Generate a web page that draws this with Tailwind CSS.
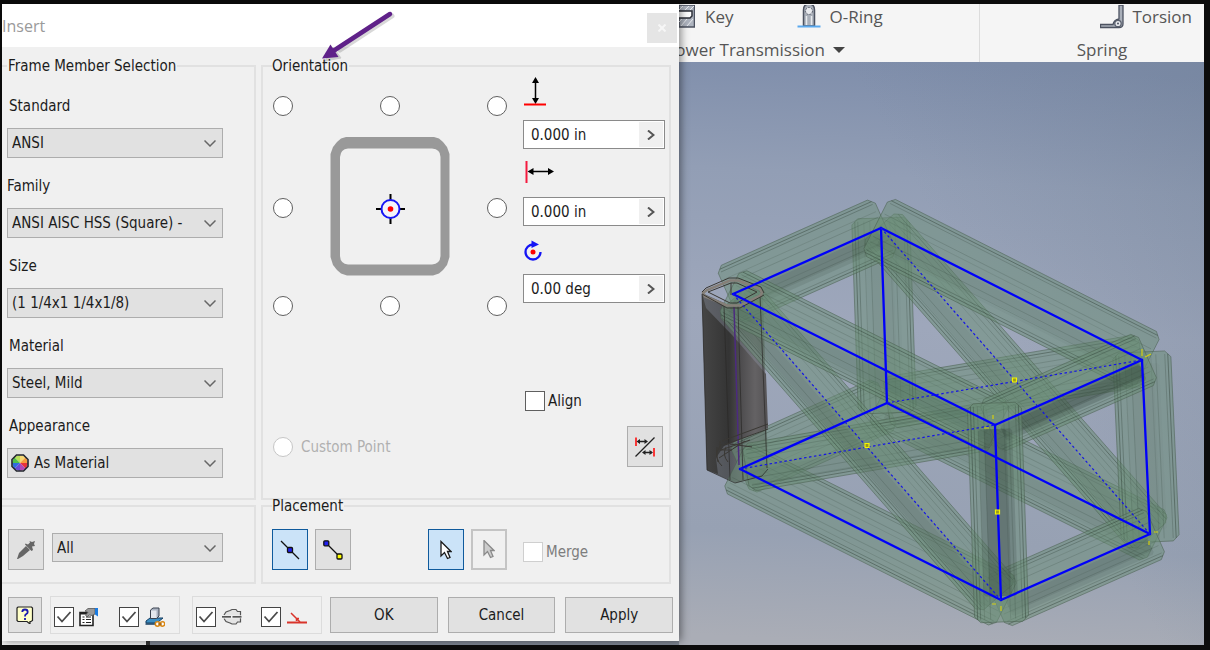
<!DOCTYPE html>
<html lang="en">
<head>
    <meta charset="UTF-8">
    <meta name="viewport" content="width=device-width, initial-scale=1.0">
    <title>Insert</title>
    <script src="https://cdn.jsdelivr.net/npm/@tailwindcss/browser@4"></script>
</head>
<body class="bg-[#0c0c0c] font-['DejaVu_Sans_Condensed','Noto_Sans',sans-serif] text-[15px] leading-5 text-[#1c1c1c]">

    <div class="grid min-h-screen grid-cols-[677fr_525fr] pt-1 pr-1.5 pb-[5px] pl-0.5">

        <!-- Insert dialog -->
        <div class="flex min-w-0 flex-col">
            <div class="relative z-10 flex flex-1 flex-col bg-[#f0f0f0] shadow-[2px_0_8px_rgba(0,0,0,0.45)]">
                <div class="flex h-[43px] items-center justify-between bg-white pr-0.5">
                    <h1 class="font-['Open_Sans','Noto_Sans',sans-serif] text-[16px] text-[#9a9a9a]">Insert</h1>
                    <button type="button" aria-label="Close" class="mt-1 flex h-[30px] w-[30px] items-center justify-center bg-[#e5e5e5]">
                        <svg class="h-2 w-2" viewBox="0 0 8 8" stroke="#f6f6f6" stroke-width="2"><path d="M0.5 0.5L7.5 7.5M7.5 0.5L0.5 7.5"/></svg>
                    </button>
                </div>

                <svg class="pointer-events-none absolute top-1 left-[312px] h-14 w-22" viewBox="314 8 88 56">
                    <g fill="#000" stroke="#000" opacity="0.15"><path d="M392 16L340 50" stroke-width="5" stroke-linecap="round"/><path d="M325 61L333 47L341 58Z"/></g>
                    <path d="M390 14L334 50.500" stroke="#5f2189" stroke-width="4.500" stroke-linecap="round"/>
                    <path d="M322 58.500L330.500 44.500L338.500 57Z" fill="#5f2189"/>
                </svg>

                <div class="grid flex-1 grid-cols-[254px_1fr] grid-rows-[1fr_79px] gap-x-[5px] gap-y-[5px] pt-[18px] pr-2">

                    <fieldset class="border-2 border-l-0 border-[#e1e1e1] pl-[5px]">
                        <legend class="h-0.5 px-px leading-[2px]">Frame Member Selection</legend>
                        <div class="flex w-[216px] flex-col gap-[18px] pt-[29px]">
                            <div class="flex flex-col gap-3">
                                <label for="standard" class="pl-0.5">Standard</label>
                                <div class="grid items-center">
                                    <select id="standard" class="col-start-1 row-start-1 h-[30px] appearance-none border border-[#adadad] bg-[#e1e1e1] px-1"><option>ANSI</option></select>
                                    <svg class="pointer-events-none col-start-1 row-start-1 mr-[7px] h-3 w-3 justify-self-end" viewBox="0 0 12 12" fill="none" stroke="#666" stroke-width="1.500"><path d="M0.500 3.500L6 9L11.500 3.500"/></svg>
                                </div>
                            </div>
                            <div class="flex flex-col gap-3">
                                <label for="family">Family</label>
                                <div class="grid items-center">
                                    <select id="family" class="col-start-1 row-start-1 h-[30px] appearance-none border border-[#adadad] bg-[#e1e1e1] px-1"><option>ANSI AISC HSS (Square) -</option></select>
                                    <svg class="pointer-events-none col-start-1 row-start-1 mr-[7px] h-3 w-3 justify-self-end" viewBox="0 0 12 12" fill="none" stroke="#666" stroke-width="1.500"><path d="M0.500 3.500L6 9L11.500 3.500"/></svg>
                                </div>
                            </div>
                            <div class="flex flex-col gap-3">
                                <label for="size" class="pl-0.5">Size</label>
                                <div class="grid items-center">
                                    <select id="size" class="col-start-1 row-start-1 h-[30px] appearance-none border border-[#adadad] bg-[#e1e1e1] px-1"><option>(1 1/4x1 1/4x1/8)</option></select>
                                    <svg class="pointer-events-none col-start-1 row-start-1 mr-[7px] h-3 w-3 justify-self-end" viewBox="0 0 12 12" fill="none" stroke="#666" stroke-width="1.500"><path d="M0.500 3.500L6 9L11.500 3.500"/></svg>
                                </div>
                            </div>
                            <div class="flex flex-col gap-3">
                                <label for="material" class="pl-0.5">Material</label>
                                <div class="grid items-center">
                                    <select id="material" class="col-start-1 row-start-1 h-[30px] appearance-none border border-[#adadad] bg-[#e1e1e1] px-1"><option>Steel, Mild</option></select>
                                    <svg class="pointer-events-none col-start-1 row-start-1 mr-[7px] h-3 w-3 justify-self-end" viewBox="0 0 12 12" fill="none" stroke="#666" stroke-width="1.500"><path d="M0.500 3.500L6 9L11.500 3.500"/></svg>
                                </div>
                            </div>
                            <div class="flex flex-col gap-3">
                                <label for="appearance" class="pl-0.5">Appearance</label>
                                <div class="grid items-center">
                                    <select id="appearance" class="col-start-1 row-start-1 h-[30px] appearance-none border border-[#adadad] bg-[#e1e1e1] pr-1 pl-[26px]"><option>As Material</option></select>
                                    <svg class="pointer-events-none col-start-1 row-start-1 ml-1 h-[18px] w-[18px]" viewBox="0 0 18 18">
                                        <path d="M9 9L3 3L9 1Z" fill="#b8e05a"/><path d="M9 9L9 1L15 3Z" fill="#f6d873"/>
                                        <path d="M9 9L15 3L17 9Z" fill="#f79a3c"/><path d="M9 9L17 9L15 15Z" fill="#e8323c"/>
                                        <path d="M9 9L15 15L9 17Z" fill="#b247b5"/><path d="M9 9L9 17L3 15Z" fill="#6a49d8"/>
                                        <path d="M9 9L3 15L1 9Z" fill="#2f6be0"/><path d="M9 9L1 9L3 3Z" fill="#4fc04a"/>
                                        <path d="M5.500 1H12.500L17 5.500V12.500L12.500 17H5.500L1 12.500V5.500Z" fill="none" stroke="#23262e" stroke-width="1.600"/>
                                    </svg>
                                    <svg class="pointer-events-none col-start-1 row-start-1 mr-[7px] h-3 w-3 justify-self-end" viewBox="0 0 12 12" fill="none" stroke="#666" stroke-width="1.500"><path d="M0.500 3.500L6 9L11.500 3.500"/></svg>
                                </div>
                            </div>
                        </div>
                    </fieldset>

                    <fieldset class="border-2 border-[#e1e1e1] pr-1 pl-[9px]">
                        <legend class="h-0.5 pr-px leading-[2px]">Orientation</legend>
                        <div class="flex h-full flex-col">
                            <div class="flex gap-4">
                                <div class="grid flex-1 grid-cols-[20px_1fr_20px] items-center justify-items-center gap-y-5 self-start pt-[29px] pl-px">
                                    <input type="radio" name="anchor" aria-label="Top left" class="h-5 w-5 appearance-none rounded-full border border-[#5f5f5f] bg-white">
                                    <input type="radio" name="anchor" aria-label="Top center" class="h-5 w-5 appearance-none rounded-full border border-[#5f5f5f] bg-white">
                                    <input type="radio" name="anchor" aria-label="Top right" class="h-5 w-5 appearance-none rounded-full border border-[#5f5f5f] bg-white">
                                    <input type="radio" name="anchor" aria-label="Middle left" class="mt-1 h-5 w-5 appearance-none rounded-full border border-[#5f5f5f] bg-white">
                                    <svg class="h-[140px] w-[120px]" viewBox="0 0 120 140">
                                        <path d="M16 1H104L109 2.500L113 6L117 11L119.500 18V121L117 129L113 134L109 137.500L103 139.500H17L11 137.500L7 134L3 129L0.500 121V18L3 11L7 6L11 2.500Z" fill="#999"/>
                                        <path d="M18 12.500H102Q110.500 13 110.500 21V120Q110 128 102 128.500H18Q10.500 128 10 120V21Q10.500 13 18 12.500Z" fill="#f0f0f0"/>
                                        <path d="M46 73H75M60.500 58V88" stroke="#000" stroke-width="2"/>
                                        <circle cx="60.500" cy="73" r="9" fill="#f4f4fa" stroke="#1616f5" stroke-width="2"/>
                                        <circle cx="60.500" cy="73" r="2.800" fill="#f00"/>
                                    </svg>
                                    <input type="radio" name="anchor" aria-label="Middle right" class="mt-1 h-5 w-5 appearance-none rounded-full border border-[#5f5f5f] bg-white">
                                    <input type="radio" name="anchor" aria-label="Bottom left" class="h-5 w-5 appearance-none rounded-full border border-[#5f5f5f] bg-white">
                                    <input type="radio" name="anchor" aria-label="Bottom center" class="h-5 w-5 appearance-none rounded-full border border-[#5f5f5f] bg-white">
                                    <input type="radio" name="anchor" aria-label="Bottom right" class="h-5 w-5 appearance-none rounded-full border border-[#5f5f5f] bg-white">
                                </div>

                                <div class="flex w-[142px] flex-col gap-2 pt-[9px]">
                                    <svg class="h-9 w-8" viewBox="0 0 32 36">
                                        <path d="M12.500 5V25" stroke="#000" stroke-width="1.500"/>
                                        <path d="M12.500 1L16 7H9ZM12.500 28L16 22H9Z"/>
                                        <path d="M1 28.500H23" stroke="#f00" stroke-width="2"/>
                                    </svg>
                                    <div class="flex h-[29px] border border-[#8a8a8a] bg-white p-px">
                                        <input type="text" value="0.000 in" aria-label="Vertical offset" class="min-w-0 flex-1 px-1.5">
                                        <button type="button" aria-label="Vertical offset options" class="flex w-6 items-center justify-center bg-[#f0f0f0]">
                                            <svg class="h-2.5 w-2" viewBox="0 0 8 10" fill="none" stroke="#555" stroke-width="2"><path d="M1 0.500L6.500 5L1 9.500"/></svg>
                                        </button>
                                    </div>
                                    <svg class="h-8 w-8" viewBox="0 0 32 32">
                                        <path d="M3.500 4V26" stroke="#f51a3f" stroke-width="2"/>
                                        <path d="M8 14.500H28" stroke="#000" stroke-width="1.500"/>
                                        <path d="M4.500 14.500L10.500 11V18ZM31 14.500L25 11V18Z"/>
                                    </svg>
                                    <div class="flex h-[29px] border border-[#8a8a8a] bg-white p-px">
                                        <input type="text" value="0.000 in" aria-label="Horizontal offset" class="min-w-0 flex-1 px-1.5">
                                        <button type="button" aria-label="Horizontal offset options" class="flex w-6 items-center justify-center bg-[#f0f0f0]">
                                            <svg class="h-2.5 w-2" viewBox="0 0 8 10" fill="none" stroke="#555" stroke-width="2"><path d="M1 0.500L6.500 5L1 9.500"/></svg>
                                        </button>
                                    </div>
                                    <svg class="h-8 w-8" viewBox="0 0 32 32">
                                        <path d="M10 10.500A7.500 7.500 0 1 0 17.500 18" fill="none" stroke="#1414f5" stroke-width="2.300"/>
                                        <path d="M8.500 6.500L16 10.500L8.500 14Z" fill="#1414f5"/>
                                        <circle cx="10" cy="18" r="2.500" fill="#f00"/>
                                    </svg>
                                    <div class="flex h-[29px] border border-[#8a8a8a] bg-white p-px">
                                        <input type="text" value="0.00 deg" aria-label="Rotation" class="min-w-0 flex-1 px-1.5">
                                        <button type="button" aria-label="Rotation options" class="flex w-6 items-center justify-center bg-[#f0f0f0]">
                                            <svg class="h-2.5 w-2" viewBox="0 0 8 10" fill="none" stroke="#555" stroke-width="2"><path d="M1 0.500L6.500 5L1 9.500"/></svg>
                                        </button>
                                    </div>
                                </div>
                            </div>

                            <div class="mt-auto flex flex-col gap-[15px] pb-[31px]">
                                <label class="flex w-[142px] items-center gap-[3px] self-end pl-0.5">
                                    <input type="checkbox" class="h-5 w-5 appearance-none border border-[#5f5f5f] bg-white">
                                    Align
                                </label>
                                <div class="flex items-center justify-between pr-0.5 pl-px">
                                    <label class="flex items-center gap-2 text-[#b0b0b0]">
                                        <input type="radio" name="anchor" disabled class="h-5 w-5 appearance-none rounded-full border border-[#c6c6c6] bg-white">
                                        Custom Point
                                    </label>
                                    <button type="button" aria-label="Flip offset" class="flex h-[41px] w-9 items-center justify-center border border-[#adadad] bg-[#e1e1e1]">
                                        <svg class="h-5 w-5" viewBox="0 0 20 20">
                                            <path d="M0.500 19.500L19.500 0.500" stroke="#222" stroke-width="1.200"/>
                                            <path d="M1 0.500V9M19 11V19.500" stroke="#f00" stroke-width="1.500"/>
                                            <path d="M3 4.500H11M9 15.500H17" stroke="#222" stroke-width="1.300"/>
                                            <path d="M1.500 4.500L5 2V7ZM13 4.500L9.500 2V7ZM7 15.500L10.500 13V18ZM18 15.500L14.500 13V18Z" fill="#222"/>
                                        </svg>
                                    </button>
                                </div>
                            </div>
                        </div>
                    </fieldset>

                    <div class="flex items-start border-2 border-l-0 border-[#e1e1e1] pt-[22px] pl-1.5">
                        <button type="button" aria-label="Copy properties" class="flex h-[41px] w-9 items-center justify-center border border-[#adadad] bg-[#e1e1e1]">
                            <svg class="h-5 w-5" viewBox="0 0 20 20" fill="#666"><path d="M1 19L3 13L10 6L14 10L7 16L2 19Z"/><path d="M9.500 3.500L12 4.500L14 2.500L13.500 1L16 2L19 1L18 4L19 6L16 6.500L17 10L15.500 11L9 4.500Z"/></svg>
                        </button>
                        <div class="mt-1 ml-2 grid w-[171px] items-center">
                            <select aria-label="Filter" class="col-start-1 row-start-1 h-[29px] appearance-none border border-[#adadad] bg-[#e1e1e1] px-1"><option>All</option></select>
                            <svg class="pointer-events-none col-start-1 row-start-1 mr-[7px] h-3 w-3 justify-self-end" viewBox="0 0 12 12" fill="none" stroke="#666" stroke-width="1.500"><path d="M0.500 3.500L6 9L11.500 3.500"/></svg>
                        </div>
                    </div>

                    <fieldset class="border-2 border-[#e1e1e1] pr-1 pl-[9px]">
                        <legend class="h-0.5 pr-px leading-[2px]">Placement</legend>
                        <div class="flex items-center pt-[22px]">
                            <div class="flex gap-[7px]">
                                <button type="button" aria-label="Insert on line" class="flex h-[41px] w-9 items-center justify-center border border-[#0f5a9c] bg-[#cbe3f8]">
                                    <svg class="h-5 w-5" viewBox="0 0 20 20" stroke="#111"><path d="M1 1L19 19" stroke-width="1.200"/><rect x="7.500" y="7.500" width="5" height="5" rx="1" fill="#2020f0" stroke-width="1.300"/></svg>
                                </button>
                                <button type="button" aria-label="Insert between points" class="flex h-[41px] w-9 items-center justify-center border border-[#adadad] bg-[#e1e1e1]">
                                    <svg class="h-5 w-5" viewBox="0 0 20 20" stroke="#111"><path d="M3 3L17 17" stroke-width="1.200"/><rect x="0.800" y="0.800" width="5" height="5" rx="1" fill="#2020f0" stroke-width="1.300"/><rect x="14" y="14" width="5" height="5" rx="1" fill="#ff0" stroke-width="1.300"/></svg>
                                </button>
                            </div>
                            <div class="mr-4 ml-auto flex gap-[7px]">
                                <button type="button" aria-label="Select" class="flex h-[41px] w-9 items-center justify-center border border-[#0f5a9c] bg-[#cbe3f8]">
                                    <svg class="h-5 w-3" viewBox="0 0 12 20" fill="#fff" stroke="#1a1a1a" stroke-width="1.300"><path d="M1 1.500V16L4.500 12.500L7.500 18.500L10 17.500L7.500 11.500H11Z"/></svg>
                                </button>
                                <button type="button" aria-label="Multi select" disabled class="flex h-[41px] w-9 items-center justify-center border-2 border-[#c4c4c4] bg-[#f0f0f0]">
                                    <svg class="h-5 w-3" viewBox="0 0 12 20" fill="#ccc" stroke="#8a8a8a" stroke-width="1.300"><path d="M1 0.500V15L4.500 11.500L7.500 17.500L10 16.500L7.500 10.500H11Z"/></svg>
                                </button>
                            </div>
                            <label class="flex w-[142px] items-center gap-[3px] pt-1 text-[#7d7d7d]">
                                <input type="checkbox" disabled class="h-5 w-5 appearance-none border border-[#cfcfcf] bg-white">
                                Merge
                            </label>
                        </div>
                    </fieldset>
                </div>

                <div class="flex h-[57px] items-center px-1.5 pt-1">
                    <button type="button" aria-label="Help" class="flex h-9 w-[34px] items-center justify-center border border-[#adadad] bg-[#e1e1e1]">
                        <svg class="h-[18px] w-[18px]" viewBox="0 0 18 18">
                            <path d="M2 1H15.500L16.500 2V14.500L15 15.500H14V18L11 15.500H2L1 14.500V2Z" fill="#ffffc8" stroke="#222" stroke-width="1.200"/>
                            <path d="M6.300 6Q6.300 3.500 9 3.500T11.700 6Q11.700 7.300 10.300 8T9 10.500M9 12V14" fill="none" stroke="#1b1bb0" stroke-width="1.800"/>
                        </svg>
                    </button>
                    <div class="ml-2 flex h-[38px] w-[130px] items-center border border-[#dcdcdc] pt-1 pl-[3px]">
                        <label class="mr-auto flex items-center gap-1">
                            <span class="grid">
                                <input type="checkbox" checked aria-label="Edit properties" class="peer col-start-1 row-start-1 h-5 w-5 appearance-none border border-[#444] bg-white">
                                <svg class="pointer-events-none invisible col-start-1 row-start-1 h-5 w-5 peer-checked:visible" viewBox="0 0 20 20" fill="none" stroke="#4a4a4a" stroke-width="1.800"><path d="M3.500 9.500L8 14.500L16.500 5"/></svg>
                            </span>
                            <svg class="h-5 w-5" viewBox="0 0 20 20">
                                <path d="M2 5.500H15V18.500H2Z" fill="#fff" stroke="#222" stroke-width="1.600"/><path d="M2 6.500H9" stroke="#222" stroke-width="2"/>
                                <path d="M4.500 10H6.500M8 10H13M4.500 12.500H6.500M8 12.500H13M4.500 15.500H6.500M8 15.500H13" stroke="#222" stroke-width="1.200"/>
                                <path d="M7 4L10 1.500H17V7L14 8.500L11 8L9 10L7.500 8L10 5.500Z" fill="#9a9a9a" stroke="#555" stroke-width="0.800"/><path d="M17 1H20V9.500L17 7.500Z" fill="#1b7be0"/>
                            </svg>
                        </label>
                        <label class="flex items-center gap-1.5 pr-3.5">
                            <span class="grid">
                                <input type="checkbox" checked aria-label="Link members" class="peer col-start-1 row-start-1 h-5 w-5 appearance-none border border-[#444] bg-white">
                                <svg class="pointer-events-none invisible col-start-1 row-start-1 h-5 w-5 peer-checked:visible" viewBox="0 0 20 20" fill="none" stroke="#4a4a4a" stroke-width="1.800"><path d="M3.500 9.500L8 14.500L16.500 5"/></svg>
                            </span>
                            <svg class="h-5 w-5" viewBox="0 0 20 20">
                                <path d="M1 14L5 11H18L13 15V16H1Z" fill="#3d8fc4" stroke="#173f63"/><path d="M0.500 17H11" stroke="#173f63" stroke-width="1.500"/>
                                <path d="M5.500 3L8 1H14V9L11.500 11.500H5.500Z" fill="#aab2c0" stroke="#3b4350"/><path d="M6 3.500H11.500V11H6Z" fill="#e4e8ee"/>
                                <circle cx="12.500" cy="17" r="2.200" fill="#fff" stroke="#d98714" stroke-width="1.500"/><circle cx="17.500" cy="17" r="2.200" fill="#fff" stroke="#d98714" stroke-width="1.500"/><path d="M13 17H17" stroke="#8a5410"/>
                            </svg>
                        </label>
                    </div>
                    <div class="ml-3 flex h-[38px] w-[130px] items-center border border-[#dcdcdc] pt-1 pl-[3px]">
                        <label class="mr-auto flex items-center gap-1.5">
                            <span class="grid">
                                <input type="checkbox" checked aria-label="Section view" class="peer col-start-1 row-start-1 h-5 w-5 appearance-none border border-[#444] bg-white">
                                <svg class="pointer-events-none invisible col-start-1 row-start-1 h-5 w-5 peer-checked:visible" viewBox="0 0 20 20" fill="none" stroke="#4a4a4a" stroke-width="1.800"><path d="M3.500 9.500L8 14.500L16.500 5"/></svg>
                            </span>
                            <svg class="h-5 w-5" viewBox="0 0 20 20" fill="#e4e4e4" stroke="#555" stroke-width="1.200">
                                <path d="M2 8L4 5L8 3.500L10 2.500H14L15.500 4.500H18.500V15H15.500L14 17H10L8 16L4 14.500L2 11.500"/><path d="M0 9.800H20" stroke="#f0f0f0" stroke-width="3"/><path d="M0 9.800H20" stroke="#222" stroke-dasharray="9 1.500"/>
                            </svg>
                        </label>
                        <label class="flex items-center gap-1.5 pr-3.5">
                            <span class="grid">
                                <input type="checkbox" checked aria-label="Angle" class="peer col-start-1 row-start-1 h-5 w-5 appearance-none border border-[#444] bg-white">
                                <svg class="pointer-events-none invisible col-start-1 row-start-1 h-5 w-5 peer-checked:visible" viewBox="0 0 20 20" fill="none" stroke="#4a4a4a" stroke-width="1.800"><path d="M3.500 9.500L8 14.500L16.500 5"/></svg>
                            </span>
                            <svg class="h-5 w-5" viewBox="0 0 20 20" fill="none" stroke="#d9342b"><path d="M0 15.500H20" stroke-width="2"/><path d="M4 6L13 15M9.500 14V11.500H12" stroke-width="1.500"/></svg>
                        </label>
                    </div>
                    <div class="ml-2 flex flex-1 gap-2.5">
                        <button type="button" class="h-9 flex-1 border border-[#adadad] bg-[#e1e1e1]">OK</button>
                        <button type="button" class="h-9 flex-1 border border-[#adadad] bg-[#e1e1e1]">Cancel</button>
                        <button type="button" class="h-9 flex-1 border border-[#adadad] bg-[#e1e1e1]">Apply</button>
                    </div>
                </div>
            </div>
            <div class="flex h-1">
                <div class="w-36 bg-[#eeeeee]"></div>
                <div class="w-1 bg-[#333]"></div>
                <div class="flex-1 bg-[#7f8794]"></div>
            </div>
        </div>

        <!-- Application window behind the dialog -->
        <div class="flex min-w-0 flex-col">
            <div class="flex h-[58px] overflow-hidden bg-[#f5f5f5] font-['Open_Sans','Noto_Sans',sans-serif] text-[17px] leading-6 text-[#555]">
                <div class="flex w-[301px] flex-col border-r border-[#dcdcdc]">
                    <div class="flex h-[26px] items-center">
                        <a href="#" class="flex items-center gap-2.5">
                            <svg class="h-6 w-4" viewBox="0 0 16 24">
                                <path d="M0 0H15.500V22H0Z" fill="#aeb4bf" stroke="#4c5260" stroke-width="1.500"/>
                                <path d="M2 21L8 14M8 21L14 14M0 17L3 14M6 5L10 1M11 5L15 1M0 5L4 1" stroke="#e8eaee"/>
                                <path d="M0 6H13V11L11 13H0" fill="#fff" stroke="#2c2f38" stroke-width="1.500"/>
                            </svg>
                            Key
                        </a>
                        <a href="#" class="ml-16 flex items-center gap-2">
                            <svg class="h-6 w-6" viewBox="0 0 24 24">
                                <path d="M6.500 21V5Q6.500 -1 12 -1T17.500 5V21Z" fill="#a9afb9" stroke="#4c5260" stroke-width="1.500"/>
                                <path d="M9.500 20V11M14.500 20V11" stroke="#e8eaee" stroke-width="1.500"/>
                                <circle cx="12" cy="6" r="3.500" fill="#e8eaee" stroke="#5a606d" stroke-dasharray="2 1"/>
                                <path d="M0.500 21.500H23.500" stroke="#5aa9ee" stroke-width="2"/>
                            </svg>
                            O-Ring
                        </a>
                    </div>
                    <div class="-ml-3.5 flex items-center gap-2 pt-2">
                        <span>Power Transmission</span>
                        <svg class="h-1.5 w-3" viewBox="0 0 12 6" fill="#444"><path d="M0 0H12L6 6Z"/></svg>
                    </div>
                </div>
                <div class="flex flex-1 flex-col">
                    <div class="flex h-[26px] items-center justify-end pr-3">
                        <a href="#" class="flex items-center gap-2">
                            <svg class="h-6 w-6" viewBox="0 0 24 24">
                                <path d="M19 0H23V19Q23 22.500 19 22.500H0.500V19.500H13Q14 15 19 14Z" fill="#a9afb9" stroke="#4c5260" stroke-width="1.300"/>
                                <circle cx="18" cy="18.500" r="3.200" fill="#e8eaee" stroke="#5a606d" stroke-width="1.300"/><circle cx="18" cy="18.500" r="1" fill="#4c5260"/>
                            </svg>
                            Torsion
                        </a>
                    </div>
                    <div class="pt-2 pl-5 text-center">Spring</div>
                </div>
            </div>

            <div class="min-h-0 flex-1">
                <svg id="model" class="h-full w-full" viewBox="679 62 525 583" preserveAspectRatio="xMidYMid slice" fill="none">
                    <defs>
                        <linearGradient id="sky" x1="0.450" y1="0" x2="0.400" y2="1"><stop offset="0" stop-color="#7f8eab"/><stop offset="0.200" stop-color="#929eb5"/><stop offset="0.450" stop-color="#9ea7bb"/><stop offset="0.820" stop-color="#97a1b3"/><stop offset="1" stop-color="#aaadb6"/></linearGradient>
                        <linearGradient id="corner" x1="0.500" y1="0.300" x2="1" y2="0"><stop offset="0" stop-color="#6c7c92" stop-opacity="0"/><stop offset="1" stop-color="#6c7c92" stop-opacity="0.350"/></linearGradient>
                        <linearGradient id="post" x1="703" x2="768" y1="0" y2="0" gradientUnits="userSpaceOnUse"><stop offset="0" stop-color="#454545"/><stop offset="0.400" stop-color="#343434"/><stop offset="0.550" stop-color="#4a494b"/><stop offset="0.800" stop-color="#646264"/><stop offset="1" stop-color="#545254"/></linearGradient>
                    </defs>
                    <rect x="679" y="62" width="525" height="583" fill="url(#sky)"/>
                    <rect x="679" y="62" width="525" height="583" fill="url(#corner)"/>
                    <path d="M702 293L733 307L763 293L768 469L762 476L736 483L707 470Z" fill="url(#post)" opacity="0.700"/>
                    <g id="bars"></g>
                    <path d="M702 293L706 308L733 336L766 374L768 428L724 446L716 458L718 474L707 470Z" fill="url(#post)"/>
                    <path d="M734 307L739 465" stroke="#4c2a80" stroke-width="1.500"/>
                    <path d="M724 306L730 480M738 306L743 480M760 295L767 468M702 294L707 470L735 483L762 476L768 469" stroke="#2a2827" stroke-opacity="0.700"/>
                    <g stroke="#3a3834" stroke-width="1">
                        <path d="M703 293L707 290L730 280.500H738L760 289L762 293L760 296L740 305.500H727L705 296.500Z" stroke="#857f78" stroke-width="2.500"/>
                        <path d="M702 292L706 288L729 278H738L761 287L764 293M702 294L727 308H740L764 295M708 292L731 283H737L757 292L737 303H730ZM731 283V295"/>
                        <path d="M717 447Q715 460 722 466M722 441L768 424M724 445L768 429M721 450L750 440M719 458L745 441M722 444Q714 452 718 462M726 447Q722 455 728 462M720 441V450H732M730 444L752 447"/>
                    </g>
                    <g id="axes" stroke="#0000fa"></g>
                    <g id="diagonals" stroke="#1414e6" stroke-width="1.200" stroke-dasharray="2.500 2.500"></g>
                    <path d="M1012.500 378H1016.500V382H1012.500ZM865 443.500H869V447.500H865ZM995.500 510H999.500V514H995.500Z" fill="#9a9a20" stroke="#f5f500" stroke-width="1.200"/>
                    <path d="M1142 349V356M1145 357L1151 354M993 415V419M984 428H989M1149 541V545M1154 532H1158M1001 606V611M992 604H996" stroke="#d4cf10" stroke-width="1.200"/>
                </svg>
            </div>
        </div>
    </div>

    <script>
        // Corner points of the frame
        const points = {
            A: [881, 228], B: [733, 294], C: [1142, 360], D: [995, 425],
            E: [887, 403], F: [740, 469], G: [1150, 534], H: [1001, 600]
        };
        // from, to, extra length at both ends, half width, opacity of the shaded side
        const members = [
            ["E", "F", 0, 28, 0], ["E", "G", 8, 28, 0.05], ["E", "C", 0, 26, 0], ["A", "E", 10, 29, 0.04], ["A", "G", 2, 25, 0.05],
            ["A", "B", 5, 31, 0.16], ["A", "C", 6, 32, 0.05], ["C", "G", 8, 29, 0.04], ["G", "H", 6, 28, 0.14], ["F", "H", 6, 28, 0],
            ["F", "D", -6, 24, 0.05], ["B", "H", -4, 25, 0.1], ["B", "D", 4, 27, 0.08], ["C", "D", 6, 28, 0.3], ["D", "H", 22, 27, 0.24]
        ];
        const svgLine = (a, b, extra) => `<line x1="${a[0]}" y1="${a[1]}" x2="${b[0]}" y2="${b[1]}" ${extra}/>`;

        let bars = "";
        members.forEach(([from, to, ext, half, shade]) => {
            const [x1, y1] = points[from];
            const [x2, y2] = points[to];
            const len = Math.hypot(x2 - x1, y2 - y1);
            const ux = (x2 - x1) / len;
            const uy = (y2 - y1) / len;
            const at = (along, side) => [x1 + ux * along - uy * side, y1 + uy * along + ux * side];
            const outline = (s1, s2, e, cut) => [
                at(-e + cut, s1), at(len + e - cut, s1), at(len + e, s1 + cut), at(len + e, s2 - cut),
                at(len + e - cut, s2), at(-e + cut, s2), at(-e, s2 - cut), at(-e, s1 + cut)
            ].map(p => p.join(",")).join(" ");
            bars += `<polygon points="${outline(-half, half, ext, 6)}" fill="rgb(108,141,118)" fill-opacity="0.52" stroke="rgb(74,96,80)" stroke-opacity="0.55"/>`;
            // shaded face lies below the axis, upright members are shaded on both sides
            let faces = ux > 0 ? [[0, 20], [3, 16]] : [[-20, 0], [-16, -3]];
            if (Math.abs(ux) < 0.2) faces = [[-17, 17], [-11, 11]];
            faces.forEach(([s1, s2]) => {
                bars += `<polygon points="${outline(s1, s2, -4, 2)}" fill="#1c2420" fill-opacity="${shade / 1.6}"/>`;
            });
            // wall thickness along both edges, then the inner bends
            [[-half + 3, 0.42], [half - 3, 0.42], [-half + 6, 0.22], [half - 6, 0.3], [-14, 0.18], [-9, 0.12], [11, 0.18], [17, 0.14]].forEach(([side, alpha]) => {
                bars += svgLine(at(-ext + 3, side), at(len + ext - 3, side), `stroke="rgb(40,56,46)" stroke-opacity="${alpha}" stroke-width="1"`);
            });
        });
        document.getElementById("bars").innerHTML = bars;

        document.getElementById("axes").innerHTML = ["AB", "AC", "AE", "EF", "EG", "BD", "CD", "CG", "DH", "FH", "GH"]
            .map(m => svgLine(points[m[0]], points[m[1]], 'stroke-width="2.3" stroke-linecap="round"')).join("");
        document.getElementById("diagonals").innerHTML = ["AG", "EC", "BH", "FD"]
            .map(m => svgLine(points[m[0]], points[m[1]], "")).join("");
    </script>

</body>
</html>
